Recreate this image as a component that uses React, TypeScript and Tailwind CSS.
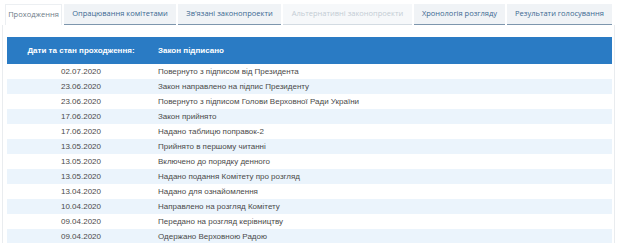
import React from "react";

const tabs = [
  { label: "Проходження", w: 57, state: "active" },
  { label: "Опрацювання комітетами", w: 112, state: "normal" },
  { label: "Зв'язані законопроекти", w: 103, state: "normal" },
  { label: "Альтернативні законопроекти", w: 129, state: "disabled" },
  { label: "Хронологія розгляду", w: 91, state: "normal" },
  { label: "Результати голосування", w: 105, state: "normal" },
];

const rows = [
  ["02.07.2020", "Повернуто з підписом від Президента"],
  ["23.06.2020", "Закон направлено на підпис Президенту"],
  ["23.06.2020", "Повернуто з підписом Голови Верховної Ради України"],
  ["17.06.2020", "Закон прийнято"],
  ["17.06.2020", "Надано таблицю поправок-2"],
  ["13.05.2020", "Прийнято в першому читанні"],
  ["13.05.2020", "Включено до порядку денного"],
  ["13.05.2020", "Надано подання Комітету про розгляд"],
  ["13.04.2020", "Надано для ознайомлення"],
  ["10.04.2020", "Направлено на розгляд Комітету"],
  ["09.04.2020", "Передано на розгляд керівництву"],
  ["09.04.2020", "Одержано Верховною Радою"],
];

export default function App() {
  return (
    <div className="w-[620px] h-[243px] overflow-hidden bg-white">
      <div className="flex gap-[2px] pl-[5px] pt-[4px] font-['Open_Sans',sans-serif] text-[7.5px]">
        {tabs.map((t) => (
          <div
            key={t.label}
            style={{ width: t.w }}
            className={
              t.state === "active"
                ? "h-[21px] flex items-center justify-center bg-white border border-b-0 border-[#eceff2] text-[#6f7c88]"
                : t.state === "disabled"
                ? "h-[21px] flex items-center justify-center bg-[#f6f8fa] border-b border-[#d3dbe2] text-[#c3ccd4]"
                : "h-[21px] flex items-center justify-center bg-[#f0f3f6] border-b-[1.5px] border-[#7d96ad] text-[#3a6891]"
            }
          >
            {t.label}
          </div>
        ))}
      </div>
      <div className="ml-[2px] w-[613px] border-l border-r border-[#e9ecef] pl-[4px] pr-[2px] pt-[12px] font-['Liberation_Sans',Arial,sans-serif] text-[8px]">
        <div className="flex h-[27px] items-center bg-[#2a7bc4] text-white font-bold">
          <div className="w-[148px] text-center">Дати та стан проходження:</div>
          <div className="pl-[3px]">Закон підписано</div>
        </div>
        {rows.map((r, i) => (
          <div
            key={i}
            className={`flex h-[15px] items-center text-[#4a4a4a] ${i % 2 === 1 ? "bg-[#ebf4fc]" : "bg-white"}`}
          >
            <div className="w-[148px] text-center">{r[0]}</div>
            <div className="pl-[3px]">{r[1]}</div>
          </div>
        ))}
      </div>
    </div>
  );
}
